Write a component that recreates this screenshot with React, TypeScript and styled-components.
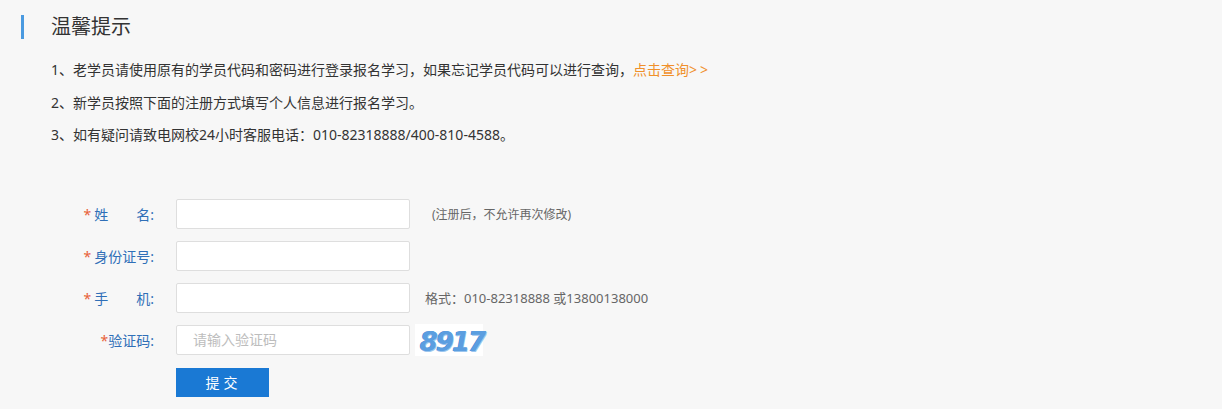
import React from "react";
import styled, { createGlobalStyle } from "styled-components";

const GlobalStyle = createGlobalStyle`
  html, body {
    margin: 0;
    padding: 0;
    background: #f7f7f7;
  }
  body {
    font-family: "Noto Sans", "Noto Sans CJK SC", sans-serif;
    color: #333;
  }
  * { box-sizing: border-box; }
`;

const Page = styled.div`
  width: 1222px;
  height: 409px;
  background: #f7f7f7;
  overflow: hidden;
  padding-top: 15px;
`;

const Header = styled.div`
  display: flex;
  align-items: center;
  height: 24px;
  padding-left: 21px;
  gap: 27px;
`;

const Bar = styled.span`
  display: block;
  width: 3px;
  height: 24px;
  background: #4a9ae0;
`;

const Title = styled.h2`
  margin: 0;
  font-size: 20px;
  font-weight: normal;
  color: #333;
  line-height: 24px;
`;

const Notes = styled.ol`
  list-style: none;
  margin: 15px 0 0;
  padding: 0 0 0 51px;
`;

const Note = styled.li`
  font-size: 14px;
  line-height: 32.5px;
  height: 32.5px;
  color: #333;
`;

const Link = styled.a`
  color: #f0902a;
  text-decoration: none;
  cursor: pointer;
`;

const Arrows = styled.span`
  letter-spacing: 3px;
`;

const Form = styled.form`
  margin-top: 47px;
  display: flex;
  flex-direction: column;
  gap: 12px;
`;

const Row = styled.div`
  display: flex;
  align-items: center;
  height: 30px;
`;

const Label = styled.label`
  width: 154px;
  flex: none;
  text-align: right;
  font-size: 14px;
  color: #2f6fb7;
  white-space: pre;
`;

const Star = styled.span<{ $tight?: boolean }>`
  color: #e8613a;
  margin-right: ${(p) => (p.$tight ? "0" : "3px")};
`;

const Input = styled.input`
  margin-left: 22px;
  width: 234px;
  height: 30px;
  border: 1px solid #dedede;
  border-radius: 2px;
  background: #fff;
  padding: 0 16px;
  font-size: 14px;
  font-family: "Noto Sans", "Noto Sans CJK SC", sans-serif;
  color: #333;
  outline: none;
  &::placeholder {
    color: #bdbdbd;
  }
`;

const Hint = styled.span<{ $offset: number; $size: number }>`
  margin-left: ${(p) => p.$offset}px;
  font-size: ${(p) => p.$size}px;
  color: #666;
`;

const Captcha = styled.span`
  margin-left: 5px;
  width: 68px;
  height: 32px;
  background: #fff;
  display: flex;
  align-items: center;
  justify-content: center;
  font-family: "DejaVu Sans", sans-serif;
  font-weight: bold;
  font-style: italic;
  font-size: 26px;
  letter-spacing: -2px;
  color: #5b9ee0;
  text-shadow: 0.6px 0.6px 0 #9cc6ee, -0.6px 0 0 #3f86d0;
  padding-left: 6px;
  padding-top: 5px;
`;

const ButtonRow = styled.div`
  padding-left: 176px;
  margin-top: 1px;
`;

const Submit = styled.button`
  width: 93px;
  height: 29px;
  border: none;
  background: #1a79d4;
  color: #fff;
  font-size: 14px;
  font-family: "Noto Sans", "Noto Sans CJK SC", sans-serif;
  letter-spacing: 4px;
  padding-left: 8px;
  cursor: pointer;
`;

export default function App() {
  return (
    <>
      <GlobalStyle />
      <Page>
        <Header>
          <Bar />
          <Title>温馨提示</Title>
        </Header>
        <Notes>
          <Note>
            1、老学员请使用原有的学员代码和密码进行登录报名学习，如果忘记学员代码可以进行查询，
            <Link>
              点击查询<Arrows>&gt;&gt;</Arrows>
            </Link>
          </Note>
          <Note>2、新学员按照下面的注册方式填写个人信息进行报名学习。</Note>
          <Note>3、如有疑问请致电网校24小时客服电话：010-82318888/400-810-4588。</Note>
        </Notes>
        <Form onSubmit={(e) => e.preventDefault()}>
          <Row>
            <Label>
              <Star>*</Star>姓{"\u3000\u3000"}名:
            </Label>
            <Input type="text" />
            <Hint $offset={22} $size={12}>(注册后，不允许再次修改)</Hint>
          </Row>
          <Row>
            <Label>
              <Star>*</Star>身份证号:
            </Label>
            <Input type="text" />
          </Row>
          <Row>
            <Label>
              <Star>*</Star>手{"\u3000\u3000"}机:
            </Label>
            <Input type="text" />
            <Hint $offset={15} $size={13}>格式：010-82318888 或13800138000</Hint>
          </Row>
          <Row>
            <Label>
              <Star $tight>*</Star>验证码:
            </Label>
            <Input type="text" placeholder="请输入验证码" />
            <Captcha>8917</Captcha>
          </Row>
          <ButtonRow>
            <Submit type="submit">提交</Submit>
          </ButtonRow>
        </Form>
      </Page>
    </>
  );
}
